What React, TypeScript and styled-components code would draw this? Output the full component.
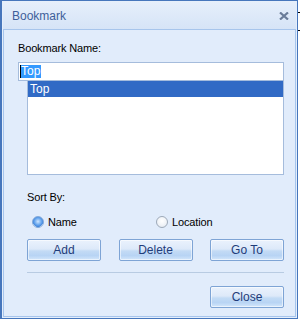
import React, { useState } from 'react'
import styled, { createGlobalStyle } from 'styled-components'

const GlobalStyle = createGlobalStyle`
  html, body {
    margin: 0;
    padding: 0;
    background: #ffffff;
  }
  body {
    font-family: "Liberation Sans", Arial, sans-serif;
    font-size: 12px;
  }
`;

// 窗口外框
const Page = styled.div`
  position: relative;
  width: 300px;
  height: 319px;
`;

const Window = styled.div`
  box-sizing: border-box;
  width: 298px;
  height: 319px;
  display: flex;
  flex-direction: column;
  border: 1px solid #4676bc;
  border-left-width: 2px;
  padding: 0 1px 1px 1px;
  background: #e3eefc;
`;

const TitleBar = styled.div`
  height: 28px;
  flex: none;
  display: flex;
  align-items: center;
  justify-content: space-between;
  padding: 0 6px 0 9px;
  background: linear-gradient(#e6effb, #d6e4f7);
`;

const Title = styled.div`
  color: #3e5f9a;
  font-size: 12px;
  padding-top: 1px;
`;

const CloseX = styled.svg`
  width: 10px;
  height: 8px;
  margin-right: 1px;
  margin-top: 1px;
`;

const Panel = styled.div`
  flex: 1;
  display: flex;
  flex-direction: column;
  border: 1px solid #a7c5ec;
  background: #e1ecfb;
  padding: 11px 11px 8px 14px;
`;

const Label = styled.div`
  color: #000;
  font-size: 11px;
  line-height: 14px;
  letter-spacing: -0.15px;
`;

const NameInput = styled.div`
  margin-top: 7px;
  height: 17px;
  border: 1px solid #a5bcdc;
  background: #fff;
  display: flex;
  align-items: center;
  padding-left: 1px;
`;

const Caret = styled.span`
  width: 1px;
  height: 13px;
  background: #000;
`;

const Selection = styled.span`
  background: #3399ff;
  color: #fff;
  line-height: 13px;
  padding: 0 1px 0 0;
`;

const ListBox = styled.div`
  margin-left: 9px;
  height: 93px;
  border: 1px solid #a5bcdc;
  border-top: none;
  background: #fff;
`;

const ListItem = styled.div<{ $selected?: boolean }>`
  height: 16px;
  line-height: 16px;
  padding-left: 2px;
  background: ${p => (p.$selected ? '#316ac5' : 'transparent')};
  color: ${p => (p.$selected ? '#fff' : '#000')};
`;

const Section = styled.div`
  margin-top: 15px;
  padding-left: 9px;
  display: flex;
  flex-direction: column;
`;

const RadioRow = styled.div`
  margin-top: 11px;
  padding-left: 5px;
  display: flex;
  height: 14px;
  align-items: center;
`;

const RadioOption = styled.label`
  width: 124px;
  display: flex;
  align-items: center;
  gap: 4px;
  cursor: pointer;
`;

const RadioDot = styled.span<{ $checked?: boolean }>`
  box-sizing: border-box;
  width: 12px;
  height: 12px;
  border-radius: 50%;
  border: 1px solid ${p => (p.$checked ? '#7fa7d8' : '#9da9b8')};
  background: ${p =>
    p.$checked
      ? 'radial-gradient(circle at 50% 45%, #cfe6ff 0, #6aa8ee 45%, #3d83dc 70%, #e6f0fb 72%)'
      : 'radial-gradient(circle at 50% 40%, #ffffff 0, #f1f4f8 50%, #dfe5ee 100%)'};
`;

const ButtonRow = styled.div`
  margin-top: 10px;
  display: flex;
  justify-content: space-between;
`;

const Button = styled.button`
  box-sizing: border-box;
  width: 74px;
  height: 22px;
  border: 1px solid #7ea4d5;
  border-radius: 2px;
  padding: 0;
  font-family: "Liberation Sans", Arial, sans-serif;
  font-size: 12px;
  color: #1f3c7a;
  background: linear-gradient(#eaf2fd 0%, #dde9f9 45%, #c3dbf5 55%, #b8d4f4 78%, #d4e7fb 100%);
  box-shadow: inset 0 0 0 1px rgba(255, 255, 255, 0.55);
  cursor: pointer;
`;

const Separator = styled.div`
  margin-top: 11px;
  height: 1px;
  background: #b8cbe2;
`;

const Footer = styled.div`
  margin-top: 13px;
  display: flex;
  justify-content: flex-end;
`;

const Tick = styled.div<{ $top: number }>`
  position: absolute;
  left: 298px;
  top: ${p => p.$top}px;
  width: 2px;
  height: 1px;
  background: #000;
`;

const App = () => {
    // 排序方式
    const [sortBy, setSortBy] = useState<'name' | 'location'>('name');
    const items = ['Top'];
    return (
        <>
            <GlobalStyle />
            <Page>
                <Window>
                    <TitleBar>
                        <Title>Bookmark</Title>
                        <CloseX viewBox="0 0 10 8">
                            <path d="M1 0.5 L9 7.5 M9 0.5 L1 7.5" stroke="#6a7c99" strokeWidth="2.2" />
                        </CloseX>
                    </TitleBar>
                    <Panel>
                        <Label>Bookmark Name:</Label>
                        <NameInput>
                            <Caret />
                            <Selection>Top</Selection>
                        </NameInput>
                        <ListBox>
                            {items.map((i, index) => (
                                <ListItem key={index} $selected={index === 0}>{i}</ListItem>
                            ))}
                        </ListBox>
                        <Section>
                            <Label>Sort By:</Label>
                            <RadioRow>
                                <RadioOption onClick={() => setSortBy('name')}>
                                    <RadioDot $checked={sortBy === 'name'} />
                                    <Label>Name</Label>
                                </RadioOption>
                                <RadioOption onClick={() => setSortBy('location')}>
                                    <RadioDot $checked={sortBy === 'location'} />
                                    <Label>Location</Label>
                                </RadioOption>
                            </RadioRow>
                            <ButtonRow>
                                <Button>Add</Button>
                                <Button>Delete</Button>
                                <Button>Go To</Button>
                            </ButtonRow>
                            <Separator />
                            <Footer>
                                <Button>Close</Button>
                            </Footer>
                        </Section>
                    </Panel>
                </Window>
                <Tick $top={12} />
                <Tick $top={30} />
            </Page>
        </>
    )
}

export default App;
